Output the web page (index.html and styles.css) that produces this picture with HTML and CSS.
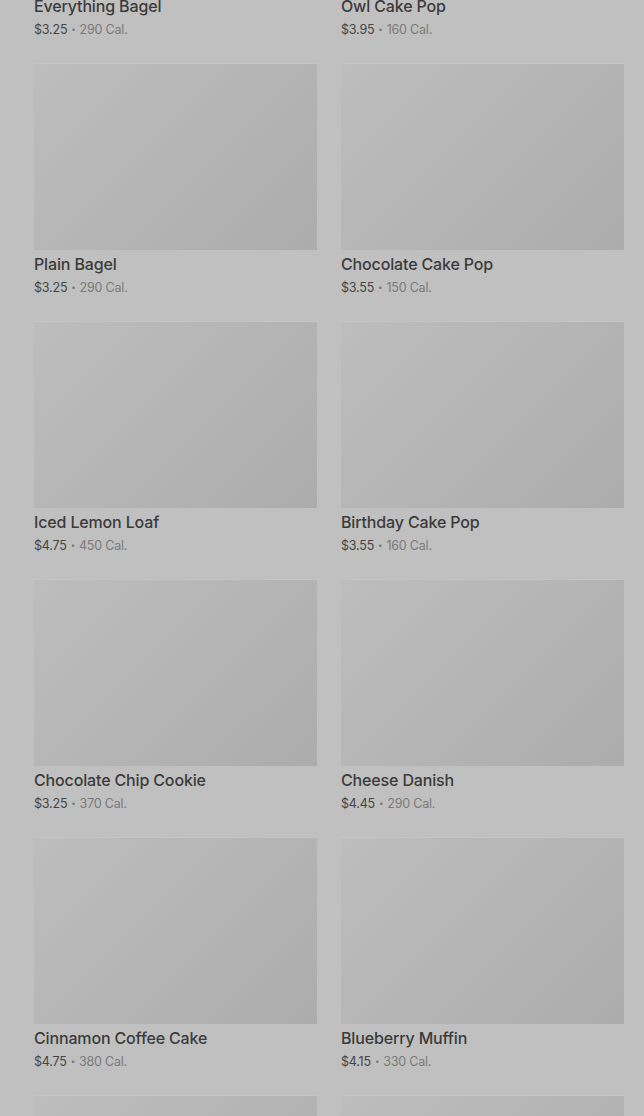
FILE: index.html
```html
<!DOCTYPE html>
<html lang="en">
<head>
    <meta charset="UTF-8">
    <meta name="viewport" content="width=device-width, initial-scale=1.0">
    <title>Bakery</title>
    <link rel="stylesheet" href="styles.css">
</head>
<body>
    <div class="menu-grid">
        <div class="product">
            <div class="product-img"></div>
            <div class="product-name">Everything Bagel</div>
            <div class="product-meta"><span class="price">$3.25</span><span class="dot">•</span>290 Cal.</div>
        </div>
        <div class="product">
            <div class="product-img"></div>
            <div class="product-name">Owl Cake Pop</div>
            <div class="product-meta"><span class="price">$3.95</span><span class="dot">•</span>160 Cal.</div>
        </div>
        <div class="product">
            <div class="product-img"></div>
            <div class="product-name">Plain Bagel</div>
            <div class="product-meta"><span class="price">$3.25</span><span class="dot">•</span>290 Cal.</div>
        </div>
        <div class="product">
            <div class="product-img"></div>
            <div class="product-name">Chocolate Cake Pop</div>
            <div class="product-meta"><span class="price">$3.55</span><span class="dot">•</span>150 Cal.</div>
        </div>
        <div class="product">
            <div class="product-img"></div>
            <div class="product-name">Iced Lemon Loaf</div>
            <div class="product-meta"><span class="price">$4.75</span><span class="dot">•</span>450 Cal.</div>
        </div>
        <div class="product">
            <div class="product-img"></div>
            <div class="product-name">Birthday Cake Pop</div>
            <div class="product-meta"><span class="price">$3.55</span><span class="dot">•</span>160 Cal.</div>
        </div>
        <div class="product">
            <div class="product-img"></div>
            <div class="product-name">Chocolate Chip Cookie</div>
            <div class="product-meta"><span class="price">$3.25</span><span class="dot">•</span>370 Cal.</div>
        </div>
        <div class="product">
            <div class="product-img"></div>
            <div class="product-name">Cheese Danish</div>
            <div class="product-meta"><span class="price">$4.45</span><span class="dot">•</span>290 Cal.</div>
        </div>
        <div class="product">
            <div class="product-img"></div>
            <div class="product-name">Cinnamon Coffee Cake</div>
            <div class="product-meta"><span class="price">$4.75</span><span class="dot">•</span>380 Cal.</div>
        </div>
        <div class="product">
            <div class="product-img"></div>
            <div class="product-name">Blueberry Muffin</div>
            <div class="product-meta"><span class="price">$4.15</span><span class="dot">•</span>330 Cal.</div>
        </div>
        <div class="product">
            <div class="product-img"></div>
        </div>
        <div class="product">
            <div class="product-img"></div>
        </div>
    </div>
</body>
</html>
```

FILE: styles.css
```css
* {
    box-sizing: border-box;
}

html, body {
    height: 100%;
    overflow: hidden;
}

body {
    margin: 0;
    background-color: #c0c0c0;
    font-family: Inter, "Liberation Sans", sans-serif;
    color: #3a3a3a;
}

/* page is scrolled: first row is cut off at the top */
.menu-grid {
    display: grid;
    grid-template-columns: 283px 283px;
    column-gap: 24px;
    row-gap: 25px;
    padding: 0 20px 0 34px;
    margin-top: -195px;
}

.product-img {
    height: 187px;
    border-top: 1px solid #c4c4c4;
    background: linear-gradient(135deg, #bdbdbd 0%, #b4b4b4 55%, #acacac 100%);
}

.product-name {
    margin-top: 4px;
    height: 20px;
    font-size: 16px;
    line-height: 20px;
    font-weight: 500;
    color: #3b3b3b;
    letter-spacing: -0.15px;
}

.product-meta {
    margin-top: 5px;
    height: 17px;
    font-size: 12.5px;
    line-height: 18px;
    color: #7a7a7a;
    letter-spacing: -0.2px;
}

.price {
    color: #454545;
}

.dot {
    display: inline-block;
    font-size: 8px;
    line-height: 1;
    margin: 0 4px;
    vertical-align: 2px;
}
```
